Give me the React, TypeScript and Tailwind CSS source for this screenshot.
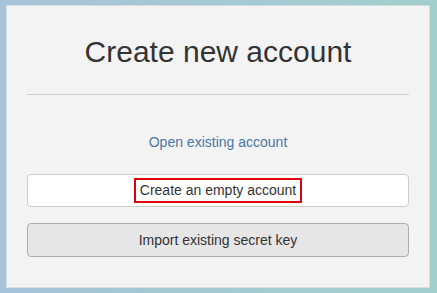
import React from "react";

export default function App() {
  return (
    <div
      className="w-[437px] h-[293px] bg-gradient-to-r from-[#a6c3d9] to-[#a1cfcc] pt-[5px] pl-[6px]"
      style={{ fontFamily: '"Liberation Sans", Arial, sans-serif' }}
    >
      <div className="w-[424px] h-[283px] bg-[#f3f3f3] border border-[#d6dde0] px-[20px] flex flex-col">
        <h1 className="text-[30px] leading-[34px] text-[#333] text-center mt-[29px]">
          Create new account
        </h1>
        <div className="h-px bg-[#d0d0d0] mt-[25px]" />
        <a className="text-[14px] leading-[16px] text-[#4a77a6] text-center mt-[39px]">
          Open existing account
        </a>
        <button className="mt-[24px] h-[33px] w-full bg-white border border-[#cccccc] rounded-[4px] flex items-center justify-center">
          <span className="border-2 border-[#e0000c] px-[4px] h-[25px] flex items-center text-[14px] text-[#333]">
            Create an empty account
          </span>
        </button>
        <button className="mt-[16px] h-[34px] w-full bg-[#e6e6e6] border border-[#adadad] rounded-[4px] flex items-center justify-center text-[14px] text-[#333]">
          Import existing secret key
        </button>
      </div>
    </div>
  );
}
